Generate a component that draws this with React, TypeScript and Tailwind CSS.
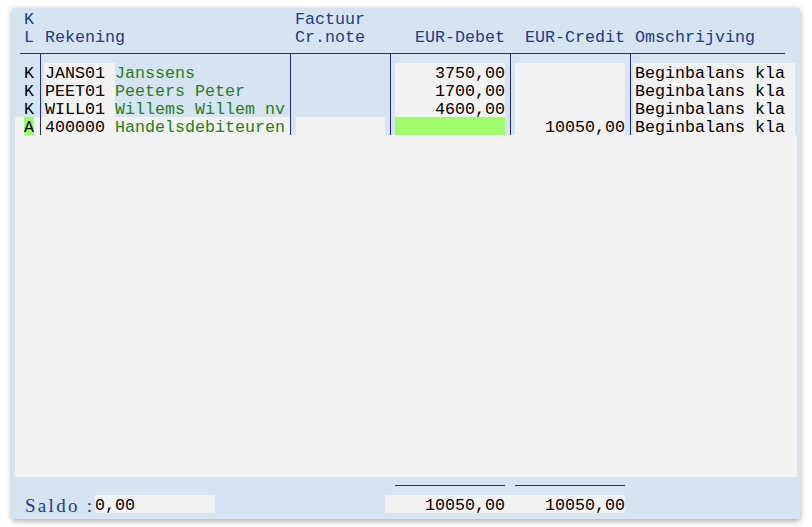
import React from 'react';

// column widths (px) inside the blue panel, lines are 1px between them
const Line = () => <div className="w-px shrink-0 bg-[#1e2f7a]" />;
const Gap = () => <div className="w-px shrink-0" />;

type Row = {
  kl: string;
  code: string;
  name: string;
  debet: string;
  credit: string;
  oms: string;
  last?: boolean;
};

const rows: Row[] = [
  { kl: 'K', code: 'JANS01', name: 'Janssens', debet: '3750,00', credit: '', oms: 'Beginbalans kla' },
  { kl: 'K', code: 'PEET01', name: 'Peeters Peter', debet: '1700,00', credit: '', oms: 'Beginbalans kla' },
  { kl: 'K', code: 'WILL01', name: 'Willems Willem nv', debet: '4600,00', credit: '', oms: 'Beginbalans kla' },
  { kl: 'A', code: '400000', name: 'Handelsdebiteuren', debet: '', credit: '10050,00', oms: 'Beginbalans kla', last: true },
];

const DataRow = ({ r }: { r: Row }) => (
  <div className="flex h-[18px] leading-[22px] whitespace-pre">
    <div className={`w-[25px] shrink-0 pl-[9px] ${r.last ? 'bg-[#f2f2f2]' : ''}`}>
      <span className={`inline-block w-[10px] h-[18px] text-black ${r.last ? 'bg-[#9dfc68]' : ''}`}>{r.kl}</span>
    </div>
    <Line />
    <div className={`w-[249px] shrink-0 flex ${r.last ? 'bg-[#f2f2f2]' : ''}`}>
      <div className="ml-[3px] w-[71px] h-[18px] pl-px bg-[#f2f2f2] text-black">{r.code}</div>
      <div className="text-[#1f7f22]">{r.name}</div>
    </div>
    <Line />
    <div className="w-[99px] shrink-0 flex">
      {r.last && <div className="ml-[5px] w-[89px] bg-[#f2f2f2]" />}
    </div>
    <Line />
    <div className="w-[119px] shrink-0 flex">
      <div className={`ml-[4px] w-[110px] h-[18px] text-right text-black ${r.last ? 'bg-[#9dfc68]' : 'bg-[#f2f2f2]'}`}>{r.debet}</div>
    </div>
    <Line />
    <div className="w-[119px] shrink-0 flex">
      <div className="ml-[4px] w-[110px] h-[18px] text-right text-black bg-[#f2f2f2]">{r.credit}</div>
    </div>
    <Line />
    <div className="w-[166px] shrink-0 flex">
      <div className="ml-[2px] w-[162px] h-[18px] pl-[2px] bg-[#f2f2f2] text-black">{r.oms}</div>
    </div>
  </div>
);

export default function App() {
  return (
    <div className="w-[812px] h-[527px] bg-white pt-[8px] pl-[12px] font-['Liberation_Mono',monospace] text-[16.66px]">
      <div className="w-[788px] h-[511px] bg-[#d6e4f2] flex flex-col shadow-[0_2px_6px_rgba(0,0,0,0.35)] text-[#1c3a8c]">
        {/* header */}
        <div className="flex ml-[3px] h-[39px] pt-[3px] leading-[18px] whitespace-pre">
          <div className="w-[25px] shrink-0 pl-[9px]">
            <div>K</div>
            <div>L</div>
          </div>
          <Gap />
          <div className="w-[249px] shrink-0 pl-[4px] pt-[18px]">Rekening</div>
          <Gap />
          <div className="w-[99px] shrink-0 pl-[4px]">
            <div>Factuur</div>
            <div>Cr.note</div>
          </div>
          <Gap />
          <div className="w-[119px] shrink-0 pt-[18px] pr-[5px] text-right">EUR-Debet</div>
          <Gap />
          <div className="w-[119px] shrink-0 pt-[18px] pr-[5px] text-right">EUR-Credit</div>
          <Gap />
          <div className="w-[166px] shrink-0 pt-[18px] pl-[4px]">Omschrijving</div>
        </div>
        <div className="mt-[6px] ml-[8px] w-[765px] h-px bg-[#1e2f7a]" />

        {/* grid */}
        <div className="ml-[3px] flex flex-col">
          <div className="flex h-[9px]">
            <div className="w-[25px] shrink-0" />
            <Line />
            <div className="w-[249px] shrink-0" />
            <Line />
            <div className="w-[99px] shrink-0" />
            <Line />
            <div className="w-[119px] shrink-0" />
            <Line />
            <div className="w-[119px] shrink-0" />
            <Line />
          </div>
          {rows.map((r) => (
            <DataRow key={r.code} r={r} />
          ))}
        </div>
        <div className="ml-[3px] w-[782px] flex-1 bg-[#f2f2f2]" />

        {/* footer */}
        <div className="h-[42px] shrink-0 pt-[8px] whitespace-pre">
          <div className="flex h-px">
            <div className="ml-[383px] w-[110px] bg-[#1e2f7a]" />
            <div className="ml-[10px] w-[110px] bg-[#1e2f7a]" />
          </div>
          <div className="flex mt-[9px] h-[18px] leading-[22px]">
            <div className="ml-[13px] w-[70px] font-['Liberation_Serif',serif] text-[19px] tracking-[2.3px]">Saldo :</div>
            <div className="w-[120px] bg-[#f2f2f2] text-black">0,00</div>
            <div className="ml-[170px] w-[120px] bg-[#f2f2f2] text-black text-right">10050,00</div>
            <div className="w-[120px] bg-[#f2f2f2] text-black text-right">10050,00</div>
          </div>
        </div>
      </div>
    </div>
  );
}
